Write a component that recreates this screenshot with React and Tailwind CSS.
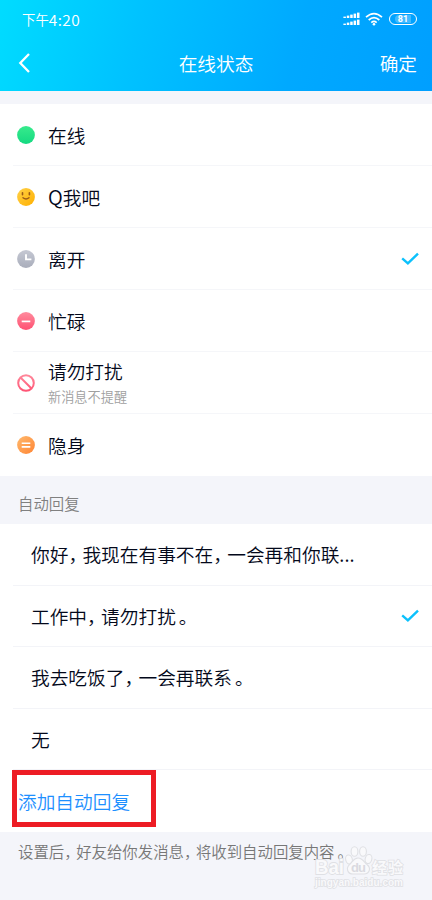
import React from 'react';

function Phrase({ text, commaClass = 'ml-0 pr-[4.7px]' }) {
  return text.split(/([，。])/).map((part, i) => {
    if (part === '，') return <span key={i} className={`[font-feature-settings:'halt'] ${commaClass}`}>，</span>;
    if (part === '。') return <span key={i} className="ml-[3px] [font-feature-settings:'halt']">。</span>;
    return <React.Fragment key={i}>{part}</React.Fragment>;
  });
}

function Check() {
  return (
    <svg className="mr-[13px] h-[14px] w-[18px] shrink-0" viewBox="0 0 18 14" fill="none">
      <path d="M1.2 6.3 L6.9 11.3 L17 1.6" stroke="#0cc1fc" strokeWidth="2.4" />
    </svg>
  );
}

function StatusIcon({ kind }) {
  return (
    <svg className="h-[18px] w-[18px] shrink-0" viewBox="0 0 18 18" fill="none">
      <defs>
        <linearGradient id="online" x1="0" y1="0" x2="0" y2="1"><stop stopColor="#37eb8c" /><stop offset="1" stopColor="#15d981" /></linearGradient>
        <linearGradient id="smile" x1="0" y1="0" x2="1" y2="1"><stop stopColor="#ffd149" /><stop offset="1" stopColor="#ffb000" /></linearGradient>
        <linearGradient id="away" x1="0" y1="0" x2="0" y2="1"><stop stopColor="#c5c8d3" /><stop offset="1" stopColor="#a9adbb" /></linearGradient>
        <linearGradient id="busy" x1="0" y1="0" x2="0" y2="1"><stop stopColor="#ff8b9d" /><stop offset="1" stopColor="#ff5172" /></linearGradient>
        <linearGradient id="dndStroke" gradientUnits="userSpaceOnUse" x1="0" y1="0" x2="0" y2="18"><stop stopColor="#ff8b9d" /><stop offset="1" stopColor="#ff5172" /></linearGradient>
        <linearGradient id="hidden" x1="0" y1="0" x2="1" y2="1"><stop stopColor="#ffb96d" /><stop offset="1" stopColor="#ff8534" /></linearGradient>
      </defs>
      {kind === 'dnd' ? (
        <g stroke="url(#dndStroke)" strokeWidth="2">
          <circle cx="9" cy="9" r="7.8" />
          <path d="M3.5 3.5 L14.5 14.5" />
        </g>
      ) : (
        <circle cx="9" cy="9" r="8.9" fill={`url(#${kind})`} />
      )}
      {kind === 'smile' && (
        <g stroke="#9b5a16" strokeLinecap="round">
          <path d="M5.5 4.8v2M12.4 4.8v2" strokeWidth="1.6" />
          <path d="M6 9.8Q9 12.4 12 9.8" strokeWidth="1.4" />
        </g>
      )}
      {kind === 'away' && <path d="M9 4.3V9.4H14.4" stroke="#fff" strokeWidth="1.9" />}
      {kind === 'busy' && <path d="M4.7 9.4H13.3" stroke="#fff" strokeWidth="1.7" />}
      {kind === 'hidden' && <path d="M4.7 7.3H13.3M4.7 10.9H13.3" stroke="#fff" strokeWidth="1.6" />}
    </svg>
  );
}

const statuses = [
  { kind: 'online', label: '在线' },
  { kind: 'smile', label: 'Q我吧' },
  { kind: 'away', label: '离开', checked: true },
  { kind: 'busy', label: '忙碌' },
  { kind: 'dnd', label: '请勿打扰', note: '新消息不提醒' },
  { kind: 'hidden', label: '隐身' },
];

const replies = [
  { text: '你好，我现在有事不在，一会再和你联...' },
  { text: '工作中，请勿打扰。', checked: true },
  { text: '我去吃饭了，一会再联系。' },
  { text: '无' },
];

function SignalBars() {
  return (
    <svg className="h-[14px] w-[17px]" viewBox="0 0 17 14" fill="#fff">
      {[0, 1, 2, 3, 4].map((i) => (
        <React.Fragment key={i}>
          <rect x={0.4 + i * 3.4} y={4.6 - i} width="2.5" height={1.4 + i} />
          <rect x={0.4 + i * 3.4} y={11.6 - i} width="2.5" height={1.4 + i} />
        </React.Fragment>
      ))}
    </svg>
  );
}

function Watermark() {
  return (
    <svg className="absolute left-[312px] top-[842px] h-[50px] w-[100px]" viewBox="0 0 100 50">
      <g fill="#f9f9fb" stroke="#dfe0e4" strokeWidth="1.1">
        <ellipse cx="37" cy="17.5" rx="3.3" ry="4.6" transform="rotate(-15 37 17.5)" />
        <ellipse cx="42.5" cy="9.5" rx="3.4" ry="4.8" />
        <ellipse cx="51" cy="9.5" rx="3.4" ry="4.8" />
        <ellipse cx="56.5" cy="17" rx="3.3" ry="4.6" transform="rotate(15 56.5 17)" />
        <path d="M46 16c-4.500 0-5.500 4-8.500 6.700-3.500 3-2.500 9.300 3.500 9.300h11c6 0 7-6.300 3.200-9.300C52 20 50.500 16 46 16z" />
        <g fontFamily="Liberation Sans, Arial, sans-serif" fontWeight="700" paintOrder="stroke">
          <text x="3" y="32" fontSize="20" strokeWidth="1.8" textLength="29" lengthAdjust="spacingAndGlyphs">Bai</text>
          <text x="3" y="44" fontSize="10" strokeWidth="1.5" textLength="88" lengthAdjust="spacingAndGlyphs">jingyan.baidu.com</text>
        </g>
        <text x="60" y="31" fontSize="15" strokeWidth="1.5" fontFamily="Noto Sans CJK SC, sans-serif" fontWeight="700" paintOrder="stroke" textLength="31">经验</text>
      </g>
      <text x="39" y="30" fontSize="13" fontWeight="700" fill="#d9dadf" fontFamily="Liberation Sans, Arial, sans-serif" textLength="15">du</text>
    </svg>
  );
}

export default function App() {
  return (
    <div className="relative flex h-[900px] w-[432px] flex-col overflow-hidden bg-[#f4f5fa] font-['Noto_Sans_CJK_SC',sans-serif] text-[18.7px] font-[350] leading-[28px] text-[#03081a]">
      <header className="flex h-[91px] shrink-0 flex-col bg-[linear-gradient(105deg,#00dcff_0%,#00c2ff_32%,#00a9ff_68%,#009fff_100%)] text-white">
        <div className="flex h-[38px] items-center justify-between pl-[22px] pr-[15px]">
          <div className="flex items-center">
            <span className="text-[13.4px] leading-[20px]">下午</span>
            <span className="font-['Noto_Sans_CJK_SC'] text-[15.5px] leading-[20px] tracking-[0.4px]">4:20</span>
          </div>
          <div className="flex items-center">
            <SignalBars />
            <svg className="ml-[5px] h-[14px] w-[18px]" viewBox="0 0 18 14" fill="none" stroke="#fff" strokeWidth="1.7">
              <path d="M1 5.200Q9-2 17 5.200M3.700 8Q9 3.200 14.300 8M6.300 10.600Q9 8.300 11.700 10.600" />
              <circle cx="9" cy="12.300" r="1.300" fill="#fff" stroke="none" />
            </svg>
            <span className="ml-[6px] flex h-[12px] w-[28px] items-center justify-center rounded-full border-[1.4px] border-white">
              <span className="flex h-[8px] w-[16px] items-center justify-center rounded-l-full bg-white/25 font-[Roboto] text-[9px] font-bold leading-[8px]">81</span>
            </span>
          </div>
        </div>
        <div className="grid h-[50px] grid-cols-[1fr_auto_1fr] items-center pl-[18px] pr-[15px]">
          <svg className="h-[20px] w-[14px]" viewBox="0 0 14 20" fill="none">
            <path d="M11 1 L2.300 10 L11 19" stroke="#fff" strokeWidth="2.3" />
          </svg>
          <span className="-ml-[3px]">在线状态</span>
          <span className="justify-self-end">确定</span>
        </div>
      </header>

      <section className="mt-[13px] shrink-0 bg-white">
        {statuses.map((s, i) => (
          <div key={s.kind} className="flex h-[62px] items-center pl-[13px]">
            <div className={`flex h-full flex-1 items-center pl-[4px] ${i < 5 ? 'border-b border-[#f5f6f9]' : ''}`}>
              <StatusIcon kind={s.kind} />
              <div className={`ml-[13px] flex flex-1 flex-col ${s.note ? 'pt-[3px]' : ''}`}>
                <span className={s.note ? 'leading-[26px]' : ''}>
                  {s.label.startsWith('Q') ? <><span className="text-[20px]">Q</span>{s.label.slice(1)}</> : s.label}
                </span>
                {s.note && <span className="text-[13.2px] leading-[26px] text-[#a0a0a0]">{s.note}</span>}
              </div>
              {s.checked && <Check />}
            </div>
          </div>
        ))}
      </section>

      <h2 className="flex h-[48px] shrink-0 items-center pl-[18px] pt-[6px] text-[15.4px] font-[350] text-[#808080]">自动回复</h2>

      <section className="h-[308px] shrink-0 bg-white">
        {replies.map((r) => (
          <div key={r.text} className="h-[61.6px] pl-[13px]">
            <div className="flex h-full items-center border-b border-[#f3f4f8] pl-[18px]">
              <span className="flex-1"><Phrase text={r.text} /></span>
              {r.checked && <Check />}
            </div>
          </div>
        ))}
        <div className="flex h-[61.6px] items-center pb-[1px] pl-[18px] text-[#1e90ff]">添加自动回复</div>
      </section>

      <p className="mt-[7px] whitespace-nowrap pl-[18px] text-[15.4px] leading-[24px] text-[#777]">
        <Phrase text="设置后，好友给你发消息，将收到自动回复内容。" commaClass="ml-0 pr-[4.3px]" />
      </p>

      <div className="absolute left-[12px] top-[770px] h-[57px] w-[144px] border-[5px] border-[#ed1c24]" />
      <Watermark />
    </div>
  );
}
